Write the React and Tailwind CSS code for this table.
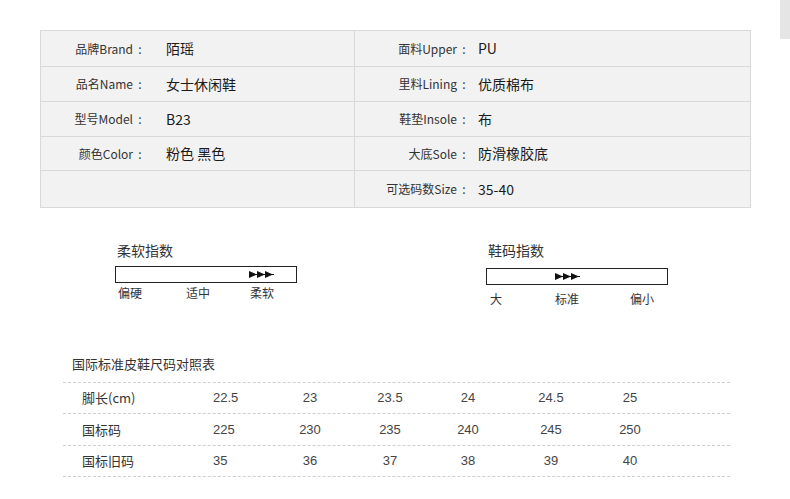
import React from 'react';

const specs = [
  [['品牌Brand', '陌瑶'], ['面料Upper', 'PU']],
  [['品名Name', '女士休闲鞋'], ['里料Lining', '优质棉布']],
  [['型号Model', 'B23'], ['鞋垫Insole', '布']],
  [['颜色Color', '粉色 黑色'], ['大底Sole', '防滑橡胶底']],
  [['', ''], ['可选码数Size', '35-40']],
];

const rowHeights = ['h-[36px]', 'h-[35px]', 'h-[35px]', 'h-[34px]', 'h-[36px]'];

const sizeRows = [
  ['脚长(cm)', ['22.5', '23', '23.5', '24', '24.5', '25']],
  ['国标码', ['225', '230', '235', '240', '245', '250']],
  ['国标旧码', ['35', '36', '37', '38', '39', '40']],
];

// first column is left aligned, the rest sit centred like the reference
const colClasses = [
  'w-[80px] pl-[27px] text-left',
  'w-[88px] text-center',
  'w-[72px] text-center',
  'w-[84px] text-center',
  'w-[82px] text-center',
  'w-[76px] text-center',
];

const Arrows = () => (
  <svg width="26" height="7" viewBox="0 0 26 7">
    <polygon points="0,0 8,3.5 0,7" fill="#111" />
    <polygon points="8,0 16,3.5 8,7" fill="#111" />
    <polygon points="16,0 24,3.5 16,7" fill="#111" />
    <rect x="0" y="3" width="25" height="1" fill="#111" />
  </svg>
);

const Label = ({ text }) =>
  text ? (
    <>
      {text}
      <span className="inline-block w-[14px] text-center">:</span>
    </>
  ) : null;

const Gauge = ({ title, labels, arrowLeft, boxTop, labelTop }) => (
  <div className="flex flex-col w-[182px]">
    <div className="text-[14px] leading-[14px] text-[#333] pl-[2px]">{title}</div>
    <div className={`h-[17px] border border-[#222] flex items-center ${boxTop}`}>
      <div className={arrowLeft}>
        <Arrows />
      </div>
    </div>
    <div className={`relative h-[14px] text-[12px] leading-[14px] text-[#333] ${labelTop}`}>
      {labels.map(([text, cls]) => (
        <span key={text} className={`absolute top-0 ${cls}`}>{text}</span>
      ))}
    </div>
  </div>
);

export default function App() {
  return (
    <div className="relative w-[790px] h-[499px] bg-white overflow-hidden font-['Noto_Sans_CJK_SC','Microsoft_YaHei',sans-serif]">
      <div className="absolute right-0 top-0 w-[10px] h-[39px] bg-[#e5e5e5]" />

      <div className="pt-[30px] pl-[40px]">
        <div className="w-[711px] border border-[#d9d9d9] bg-[#f2f2f2]">
          {specs.map((row, i) => (
            <div key={i} className={`flex ${rowHeights[i]} ${i < specs.length - 1 ? 'border-b border-[#d9d9d9]' : ''}`}>
              <div className="w-[314px] flex items-center border-r border-[#d9d9d9]">
                <div className="w-[106px] text-right text-[12px] text-[#333]">
                  <Label text={row[0][0]} />
                </div>
                <div className="ml-[19px] text-[14px] text-[#1a1a1a]">{row[0][1]}</div>
              </div>
              <div className="flex-1 flex items-center">
                <div className="w-[116px] text-right text-[12px] text-[#333]">
                  <Label text={row[1][0]} />
                </div>
                <div className="ml-[7px] text-[14px] text-[#1a1a1a]">{row[1][1]}</div>
              </div>
            </div>
          ))}
        </div>
      </div>

      <div className="flex pt-[35px] pl-[115px]">
        <Gauge
          title="柔软指数"
          arrowLeft="ml-[133px]"
          boxTop="mt-[9px]"
          labelTop="mt-[3px]"
          labels={[
            ['偏硬', 'left-[3px]'],
            ['适中', 'left-[71px]'],
            ['柔软', 'left-[135px]'],
          ]}
        />
        <div className="ml-[189px]">
          <Gauge
            title="鞋码指数"
            arrowLeft="ml-[68px]"
            boxTop="mt-[11px]"
            labelTop="mt-[7px]"
            labels={[
              ['大', 'left-[4px]'],
              ['标准', 'left-[69px]'],
              ['偏小', 'left-[144px]'],
            ]}
          />
        </div>
      </div>

      <div className="pl-[63px] pt-[50px]">
        <div className="pl-[9px] text-[13px] leading-[16px] text-[#333]">国际标准皮鞋尺码对照表</div>
        <div className="mt-[10px] w-[667px] border-t border-dashed border-[#cfcfcf]">
          {sizeRows.map(([label, vals], i) => (
            <div
              key={label}
              className={`flex items-center border-b border-dashed border-[#cfcfcf] ${i === 1 ? 'h-[32px]' : 'h-[31px]'}`}
            >
              <div className="w-[123px] pl-[19px] text-[13px] text-[#333]">{label}</div>
              {vals.map((v, j) => (
                <div key={j} className={`${colClasses[j]} text-[13px] text-[#444] font-['Liberation_Sans',sans-serif]`}>
                  {v}
                </div>
              ))}
            </div>
          ))}
        </div>
      </div>
    </div>
  );
}
